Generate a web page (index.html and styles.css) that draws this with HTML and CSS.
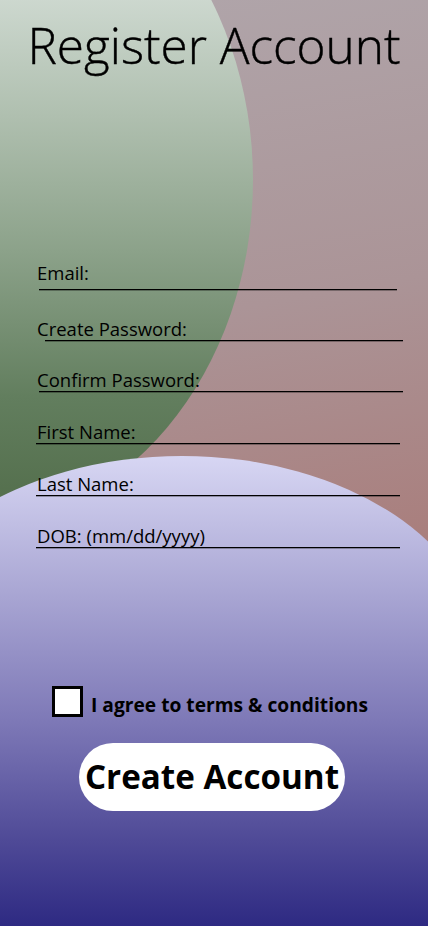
FILE: index.html
```html
<!DOCTYPE html>
<html lang="en">
<head>
<meta charset="utf-8">
<title>Register Account</title>
<link rel="stylesheet" href="styles.css">
</head>
<body>
<div class="page">
  <div class="blob blob-green"></div>
  <div class="blob blob-lavender"></div>
  <main class="content">
    <h1 class="title">Register Account</h1>
    <form class="form">
      <div class="field field-email"><label class="label">Email:</label><span class="line line-email"></span></div>
      <div class="field"><label class="label">Create Password:</label><span class="line line-create"></span></div>
      <div class="field"><label class="label">Confirm Password:</label><span class="line line-confirm"></span></div>
      <div class="field field-wide"><label class="label">First Name:</label><span class="line"></span></div>
      <div class="field field-wide"><label class="label">Last Name:</label><span class="line"></span></div>
      <div class="field field-wide"><label class="label">DOB: (mm/dd/yyyy)</label><span class="line"></span></div>
    </form>
    <div class="terms">
      <span class="box"></span>
      <span class="terms-text">I agree to terms &amp; conditions</span>
    </div>
    <button class="cta" type="button">Create Account</button>
  </main>
</div>
</body>
</html>
```
FILE: styles.css
```css
html, body {
  margin: 0;
  padding: 0;
}
body {
  font-family: "Open Sans", "Noto Sans", sans-serif;
  color: #000;
}
.page {
  position: relative;
  width: 428px;
  height: 926px;
  overflow: hidden;
  background: linear-gradient(170deg, #b0a6ab 0%, #ab9497 35%, #a8736f 75%, #a8706b 100%);
}
.blob {
  position: absolute;
  z-index: 0;
}
.blob-green {
  left: -333px;
  top: -170px;
  width: 586px;
  height: 700px;
  border-radius: 50%;
  background: linear-gradient(to bottom, #dfe6df 0%, #cdd8cf 24%, #afbfaf 41%, #8ca28a 60%, #627e5e 81%, #55704e 95%);
}
.blob-lavender {
  left: -118px;
  top: 456px;
  width: 600px;
  height: 480px;
  border-radius: 300px 300px 0 0 / 200px 200px 0 0;
  background: linear-gradient(to bottom, #d7d6f3 0%, #aaa7d4 28%, #7e79b7 55%, #4f4a97 80%, #2a2680 100%);
}
.content {
  position: relative;
  z-index: 1;
  display: flex;
  flex-direction: column;
}
.title {
  margin: 0;
  padding-top: 21px;
  font-size: 49.5px;
  line-height: 49.5px;
  font-weight: 300;
  -webkit-text-stroke: 0.4px #000;
  text-align: center;
}
.form {
  margin-top: 191px;
  display: flex;
  flex-direction: column;
}
.field {
  display: flex;
  flex-direction: column;
  margin-top: 28px;
}
.field-wide {
  margin-top: 29px;
}
.field-email {
  margin-top: 0;
}
.label {
  padding-left: 37px;
  font-size: 18.5px;
  line-height: 22px;
  height: 22px;
}
.field-email .label {
  padding-bottom: 5px;
}
.line {
  display: block;
  height: 1px;
  background: #000;
  box-shadow: 0 1px 0 rgba(0, 0, 0, 0.3);
  margin-left: 36px;
  width: 364px;
}
.line-email {
  margin-left: 39px;
  width: 358px;
}
.line-create {
  margin-left: 45px;
  width: 358px;
}
.line-confirm {
  margin-left: 39px;
  width: 364px;
}
.terms {
  margin-top: 138px;
  padding-left: 52px;
  display: flex;
  align-items: flex-end;
  gap: 8px;
}
.box {
  width: 25px;
  height: 25px;
  border: 3px solid #000;
  background: #fff;
}
.terms-text {
  font-size: 19.2px;
  line-height: 24px;
  font-weight: 700;
}
.cta {
  margin-top: 26px;
  margin-left: 79px;
  width: 266px;
  height: 68px;
  border: none;
  border-radius: 34px;
  background: #fff;
  color: #000;
  font-family: "Open Sans", "Noto Sans", sans-serif;
  font-size: 33.2px;
  font-weight: 700;
  padding: 0;
}
```
